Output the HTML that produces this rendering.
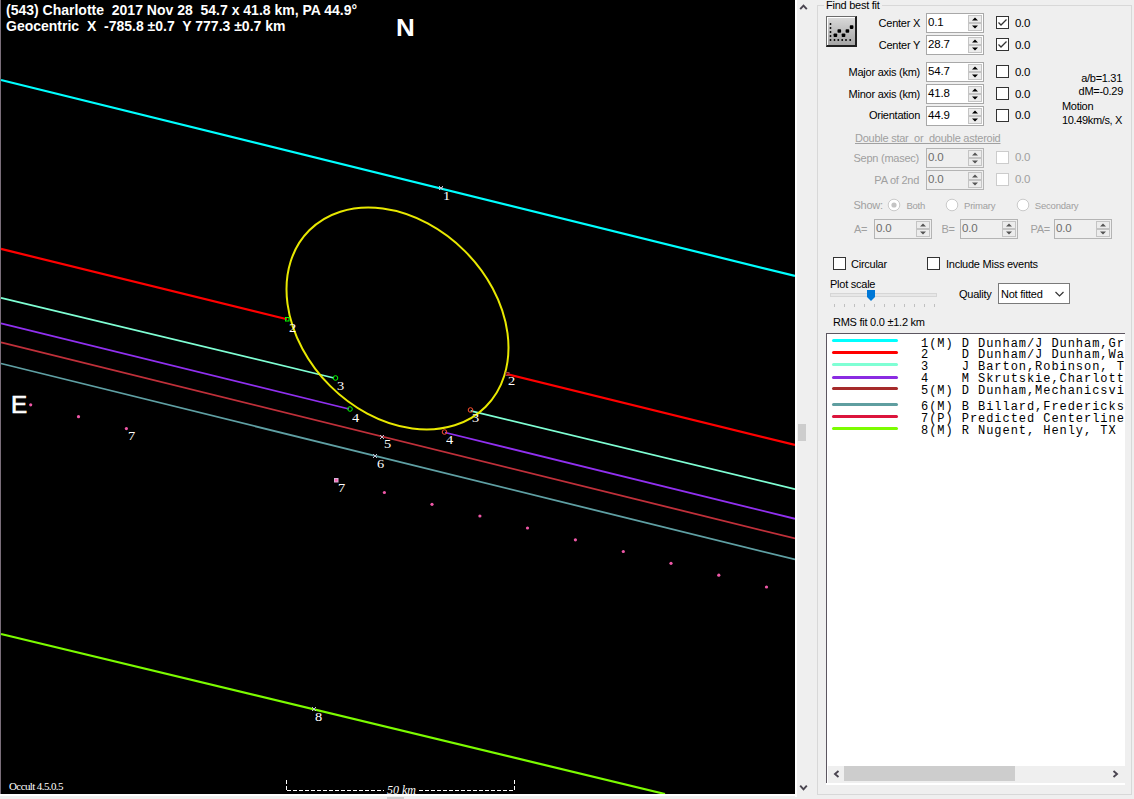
<!DOCTYPE html>
<html><head><meta charset="utf-8">
<style>
html,body{margin:0;padding:0}
body{width:1134px;height:799px;overflow:hidden;position:relative;background:#efefef;font-family:"Liberation Sans",sans-serif;font-size:11px;color:#000}
.a{position:absolute;white-space:pre}
#plot{position:absolute;left:0;top:0;width:795px;height:794px;background:#000;overflow:hidden}
.pt{position:absolute;white-space:pre;color:#fff}
.lbl{font-family:"Liberation Serif",serif;font-size:12px;color:#fff;position:absolute;line-height:11px;transform:scaleX(1.2);transform-origin:0 0}
.mono{font-family:"Liberation Mono",monospace}
</style></head><body>

<div class="a" style="left:795px;top:0;width:2px;height:797px;background:#fff"></div>
<div class="a" style="left:0;top:794px;width:797px;height:2.2px;background:#fff"></div>
<div class="a" style="left:387px;top:797px;width:17px;height:2px;background:#cdcdcd"></div>
<div id="plot">
<svg width="795" height="794" style="position:absolute;left:0;top:0">
<rect x="0" y="0" width="1" height="794" fill="#7a6e7a"/>
<g fill="none" stroke-linecap="butt">
<line x1="1" y1="80" x2="795" y2="276" stroke="#00ffff" stroke-width="2.2"/>
<line x1="1" y1="248.9" x2="287" y2="319.25" stroke="#ff0000" stroke-width="2.2"/>
<line x1="507" y1="374.2" x2="795" y2="445" stroke="#ff0000" stroke-width="2.2"/>
<line x1="1" y1="297.8" x2="334" y2="378" stroke="#7fffd4" stroke-width="1.7"/>
<line x1="470.6" y1="410.9" x2="795" y2="489.2" stroke="#7fffd4" stroke-width="1.7"/>
<line x1="1" y1="323.3" x2="349" y2="409" stroke="#9030f0" stroke-width="1.8"/>
<line x1="445" y1="432.5" x2="795" y2="518.8" stroke="#9030f0" stroke-width="1.8"/>
<line x1="1" y1="342.4" x2="795" y2="538.5" stroke="#c0303a" stroke-width="1.8"/>
<line x1="1" y1="363.5" x2="795" y2="559.5" stroke="#5fa0a4" stroke-width="1.8"/>
<line x1="1" y1="634" x2="665" y2="794" stroke="#7cfc00" stroke-width="2.2"/>
<ellipse cx="397.5" cy="318.5" rx="124.7" ry="95.3" transform="rotate(45 397.5 318.5)" stroke="#e8e800" stroke-width="2"/>
</g>
<!-- markers -->
<g fill="none">
<rect x="285.5" y="317.5" width="3.5" height="3.5" stroke="#00ff00" stroke-width="1"/>
<circle cx="335.5" cy="378" r="2.3" stroke="#00ff00" stroke-width="1"/>
<circle cx="350" cy="409" r="2.3" stroke="#00ff00" stroke-width="1"/>
<circle cx="470.5" cy="410" r="2.3" stroke="#ff5030" stroke-width="1"/>
<circle cx="444.5" cy="432" r="2.3" stroke="#ff5030" stroke-width="1"/>
<rect x="506" y="372.5" width="3" height="3" stroke="#a04040" stroke-width="1"/>
</g>
<g stroke="#c0c0d0" stroke-width="1" fill="none">
<path d="M439 186l4 4M443 186l-4 4M439 188h4"/>
<path d="M380 435l4 4M384 435l-4 4"/>
<path d="M373 454l4 4M377 454l-4 4"/>
<path d="M312 707l4 4M316 707l-4 4"/>
</g>
<rect x="334.5" y="478.5" width="3.5" height="3.5" fill="#ff60b0" stroke="#d8b0d8" stroke-width="1"/>
<g fill="#f058a8">
<circle cx="30.7" cy="404.8" r="1.6"/>
<circle cx="78.5" cy="416.7" r="1.6"/>
<circle cx="126.4" cy="428.6" r="1.6"/>
<circle cx="384.4" cy="492.5" r="1.6"/>
<circle cx="432" cy="504.3" r="1.6"/>
<circle cx="479.9" cy="516" r="1.6"/>
<circle cx="527.5" cy="528" r="1.6"/>
<circle cx="575.4" cy="539.8" r="1.6"/>
<circle cx="623.3" cy="551.5" r="1.6"/>
<circle cx="671" cy="563.3" r="1.6"/>
<circle cx="718.8" cy="575.2" r="1.6"/>
<circle cx="766.5" cy="587" r="1.6"/>
</g>
<!-- scale bar -->
<g stroke="#fff" stroke-width="1" fill="none">
<path d="M286.5 780v11M514.5 780v11" stroke-dasharray="4 2"/>
<path d="M287 790.5H384" stroke-dasharray="4 2"/>
<path d="M419 790.5H514" stroke-dasharray="4 2"/>
</g>
</svg>
<div class="pt" style="left:6px;top:2px;font-weight:bold;font-size:14px;line-height:16px">(543) Charlotte&nbsp; 2017 Nov 28&nbsp; 54.7 x 41.8 km, PA 44.9°</div>
<div class="pt" style="left:6px;top:18px;font-weight:bold;font-size:14px;line-height:16px">Geocentric&nbsp; X&nbsp; -785.8 ±0.7&nbsp; Y 777.3 ±0.7 km</div>
<div class="pt" style="left:396px;top:15.5px;font-weight:bold;font-size:23px;line-height:24px;transform:scaleX(1.13);transform-origin:0 0">N</div>
<div class="pt" style="left:11px;top:393px;font-size:23px;line-height:24px;transform:scaleX(1.05);transform-origin:0 0;-webkit-text-stroke:0.7px #fff">E</div>
<div class="lbl" style="left:443px;top:191px">1</div>
<div class="lbl" style="left:289px;top:322.5px">2</div>
<div class="lbl" style="left:508px;top:376px">2</div>
<div class="lbl" style="left:337px;top:381px">3</div>
<div class="lbl" style="left:472px;top:413px">3</div>
<div class="lbl" style="left:352px;top:412.5px">4</div>
<div class="lbl" style="left:446px;top:435px">4</div>
<div class="lbl" style="left:384px;top:439px">5</div>
<div class="lbl" style="left:377px;top:459px">6</div>
<div class="lbl" style="left:128px;top:431px">7</div>
<div class="lbl" style="left:338px;top:483px">7</div>
<div class="lbl" style="left:315px;top:712px">8</div>
<div class="pt" style="left:9px;top:780px;font-family:'Liberation Serif',serif;font-size:11px;line-height:12px;letter-spacing:-0.6px">Occult 4.5.0.5</div>
<div class="pt" style="left:387px;top:783.5px;font-family:'Liberation Serif',serif;font-style:italic;font-size:12px;line-height:12px">50 km</div>
</div>

<svg class="a" style="left:798px;top:0" width="12" height="799"><path d="M2.2 9.2L5.5 5.6L8.8 9.2" stroke="#4a4550" stroke-width="1.9" fill="none"/><path d="M2.2 785.6L5.5 789.4L8.8 785.6" stroke="#4a4550" stroke-width="1.9" fill="none"/><rect x="0" y="424" width="8" height="17" fill="#cdcdcd"/></svg>
<div class="a" style="left:817px;top:5px;width:315px;height:790px;box-sizing:border-box;border:1px solid #d8d8d8"></div>
<div class="a" style="left:824px;top:0px;width:58px;height:10px;background:#efefef"></div>
<div class="a" style="left:826px;top:-1.31px;font-size:11px;line-height:13px;color:#000;letter-spacing:-0.25px;">Find best fit</div>
<div class="a" style="left:826px;top:16px;width:31px;height:31px;box-sizing:border-box;border:1px solid #6a6a6a;border-right:2px solid #1e1e1e;border-bottom:2px solid #1e1e1e;background:linear-gradient(#dadada,#b9b9b9 60%,#a5a5a5)"></div>
<div class="a" style="left:827px;top:17px;width:28px;height:28px;box-sizing:border-box;border-top:1.5px solid #fff;border-left:1.5px solid #fff"></div>
<svg class="a" style="left:826px;top:16px" width="31" height="31">
<g fill="#000"><circle cx="4.5" cy="8" r="0.95"/><circle cx="4.5" cy="12" r="0.95"/><circle cx="4.5" cy="16" r="0.95"/><circle cx="4.5" cy="20" r="0.95"/><circle cx="4.5" cy="24" r="0.95"/>
<circle cx="8.5" cy="24" r="0.95"/><circle cx="12.3" cy="24" r="0.95"/><circle cx="16.2" cy="24" r="0.95"/><circle cx="20" cy="24" r="0.95"/><circle cx="24.2" cy="24" r="0.95"/>
<rect x="7.6" y="17.4" width="3.6" height="3.6" rx="0.8"/><rect x="11.5" y="13.2" width="3.6" height="3.6" rx="0.8"/><rect x="15.7" y="17.4" width="3.6" height="3.6" rx="0.8"/><rect x="19.6" y="13.2" width="3.6" height="3.6" rx="0.8"/><rect x="23.8" y="9.3" width="3.6" height="3.6" rx="0.8"/></g>
</svg>
<div class="a" style="right:214px;top:17.19px;font-size:11px;line-height:13px;color:#000;letter-spacing:-0.25px;">Center X</div>
<div class="a" style="left:926px;top:13px;width:58px;height:20px;box-sizing:border-box;border:1px solid #a8a8a8;background:#fff"></div>
<div class="a" style="left:928px;top:15.52px;font-size:11.5px;line-height:13px;color:#000;letter-spacing:-0.2px;">0.1</div>
<div class="a" style="left:968px;top:15px;width:14px;height:16px;box-sizing:border-box;border:1px solid #c4c4c4;background:#ececec"></div>
<div class="a" style="left:968px;top:22px;width:14px;height:1.5px;background:#c4c4c4"></div>
<svg class="a" style="left:968px;top:15px" width="14" height="16"><path d="M4 5.5L7 2.5L10 5.5Z M4 10.5L7 13.5L10 10.5Z" fill="#000"/></svg>
<div class="a" style="left:996px;top:16px;width:13px;height:13px;box-sizing:border-box;border:1px solid #333;background:#fff"></div>
<svg class="a" style="left:996px;top:16px" width="13" height="13"><path d="M2.5 6.5L5 9L10.5 3.5" stroke="#333" stroke-width="1.3" fill="none"/></svg>
<div class="a" style="left:1015px;top:17.02px;font-size:11.5px;line-height:13px;color:#000;letter-spacing:-0.3px;">0.0</div>
<div class="a" style="right:214px;top:39.39px;font-size:11px;line-height:13px;color:#000;letter-spacing:-0.25px;">Center Y</div>
<div class="a" style="left:926px;top:35px;width:58px;height:20px;box-sizing:border-box;border:1px solid #a8a8a8;background:#fff"></div>
<div class="a" style="left:928px;top:37.52px;font-size:11.5px;line-height:13px;color:#000;letter-spacing:-0.2px;">28.7</div>
<div class="a" style="left:968px;top:37px;width:14px;height:16px;box-sizing:border-box;border:1px solid #c4c4c4;background:#ececec"></div>
<div class="a" style="left:968px;top:44px;width:14px;height:1.5px;background:#c4c4c4"></div>
<svg class="a" style="left:968px;top:37px" width="14" height="16"><path d="M4 5.5L7 2.5L10 5.5Z M4 10.5L7 13.5L10 10.5Z" fill="#000"/></svg>
<div class="a" style="left:996px;top:38px;width:13px;height:13px;box-sizing:border-box;border:1px solid #333;background:#fff"></div>
<svg class="a" style="left:996px;top:38px" width="13" height="13"><path d="M2.5 6.5L5 9L10.5 3.5" stroke="#333" stroke-width="1.3" fill="none"/></svg>
<div class="a" style="left:1015px;top:39.22px;font-size:11.5px;line-height:13px;color:#000;letter-spacing:-0.3px;">0.0</div>
<div class="a" style="right:214px;top:66.39px;font-size:11px;line-height:13px;color:#000;letter-spacing:-0.25px;">Major axis (km)</div>
<div class="a" style="left:926px;top:62px;width:58px;height:20px;box-sizing:border-box;border:1px solid #a8a8a8;background:#fff"></div>
<div class="a" style="left:928px;top:64.52px;font-size:11.5px;line-height:13px;color:#000;letter-spacing:-0.2px;">54.7</div>
<div class="a" style="left:968px;top:64px;width:14px;height:16px;box-sizing:border-box;border:1px solid #c4c4c4;background:#ececec"></div>
<div class="a" style="left:968px;top:71px;width:14px;height:1.5px;background:#c4c4c4"></div>
<svg class="a" style="left:968px;top:64px" width="14" height="16"><path d="M4 5.5L7 2.5L10 5.5Z M4 10.5L7 13.5L10 10.5Z" fill="#000"/></svg>
<div class="a" style="left:996px;top:65px;width:13px;height:13px;box-sizing:border-box;border:1px solid #333;background:#fff"></div>
<div class="a" style="left:1015px;top:66.22px;font-size:11.5px;line-height:13px;color:#000;letter-spacing:-0.3px;">0.0</div>
<div class="a" style="right:214px;top:88.29px;font-size:11px;line-height:13px;color:#000;letter-spacing:-0.25px;">Minor axis (km)</div>
<div class="a" style="left:926px;top:84px;width:58px;height:20px;box-sizing:border-box;border:1px solid #a8a8a8;background:#fff"></div>
<div class="a" style="left:928px;top:86.52px;font-size:11.5px;line-height:13px;color:#000;letter-spacing:-0.2px;">41.8</div>
<div class="a" style="left:968px;top:86px;width:14px;height:16px;box-sizing:border-box;border:1px solid #c4c4c4;background:#ececec"></div>
<div class="a" style="left:968px;top:93px;width:14px;height:1.5px;background:#c4c4c4"></div>
<svg class="a" style="left:968px;top:86px" width="14" height="16"><path d="M4 5.5L7 2.5L10 5.5Z M4 10.5L7 13.5L10 10.5Z" fill="#000"/></svg>
<div class="a" style="left:996px;top:87px;width:13px;height:13px;box-sizing:border-box;border:1px solid #333;background:#fff"></div>
<div class="a" style="left:1015px;top:88.12px;font-size:11.5px;line-height:13px;color:#000;letter-spacing:-0.3px;">0.0</div>
<div class="a" style="right:214px;top:109.29px;font-size:11px;line-height:13px;color:#000;letter-spacing:-0.25px;">Orientation</div>
<div class="a" style="left:926px;top:106px;width:58px;height:20px;box-sizing:border-box;border:1px solid #a8a8a8;background:#fff"></div>
<div class="a" style="left:928px;top:108.52px;font-size:11.5px;line-height:13px;color:#000;letter-spacing:-0.2px;">44.9</div>
<div class="a" style="left:968px;top:108px;width:14px;height:16px;box-sizing:border-box;border:1px solid #c4c4c4;background:#ececec"></div>
<div class="a" style="left:968px;top:115px;width:14px;height:1.5px;background:#c4c4c4"></div>
<svg class="a" style="left:968px;top:108px" width="14" height="16"><path d="M4 5.5L7 2.5L10 5.5Z M4 10.5L7 13.5L10 10.5Z" fill="#000"/></svg>
<div class="a" style="left:996px;top:109px;width:13px;height:13px;box-sizing:border-box;border:1px solid #333;background:#fff"></div>
<div class="a" style="left:1015px;top:109.12px;font-size:11.5px;line-height:13px;color:#000;letter-spacing:-0.3px;">0.0</div>
<div class="a" style="right:12px;top:72.09px;font-size:11px;line-height:13px;color:#000;letter-spacing:-0.3px;">a/b=1.31</div>
<div class="a" style="right:11px;top:85.09px;font-size:11px;line-height:13px;color:#000;letter-spacing:-0.3px;">dM=-0.29</div>
<div class="a" style="left:1062px;top:100.29px;font-size:11px;line-height:13px;color:#000;letter-spacing:-0.3px;">Motion</div>
<div class="a" style="left:1062px;top:113.89px;font-size:11px;line-height:13px;color:#000;letter-spacing:-0.35px;">10.49km/s, X</div>
<div class="a" style="left:855px;top:132.49px;font-size:11px;line-height:13px;color:#a0a0a0;letter-spacing:-0.25px;text-decoration:underline;">Double star  or  double asteroid</div>
<div class="a" style="right:215px;top:152.19px;font-size:11px;line-height:13px;color:#a0a0a0;letter-spacing:-0.25px;">Sepn (masec)</div>
<div class="a" style="left:926px;top:148px;width:58px;height:20px;box-sizing:border-box;border:1px solid #b4b4b4;background:#efefef"></div>
<div class="a" style="left:928px;top:150.52px;font-size:11.5px;line-height:13px;color:#6d6d6d;letter-spacing:-0.2px;">0.0</div>
<div class="a" style="left:968px;top:150px;width:14px;height:16px;box-sizing:border-box;border:1px solid #c4c4c4;background:#ececec"></div>
<div class="a" style="left:968px;top:157px;width:14px;height:1.5px;background:#c4c4c4"></div>
<svg class="a" style="left:968px;top:150px" width="14" height="16"><path d="M4 5.5L7 2.5L10 5.5Z M4 10.5L7 13.5L10 10.5Z" fill="#555"/></svg>
<div class="a" style="left:996px;top:151px;width:13px;height:13px;box-sizing:border-box;border:1px solid #cccccc;background:#fff"></div>
<div class="a" style="left:1015px;top:151.02px;font-size:11.5px;line-height:13px;color:#a0a0a0;letter-spacing:-0.3px;">0.0</div>
<div class="a" style="right:215px;top:174.19px;font-size:11px;line-height:13px;color:#a0a0a0;letter-spacing:-0.25px;">PA of 2nd</div>
<div class="a" style="left:926px;top:170px;width:58px;height:20px;box-sizing:border-box;border:1px solid #b4b4b4;background:#efefef"></div>
<div class="a" style="left:928px;top:172.52px;font-size:11.5px;line-height:13px;color:#6d6d6d;letter-spacing:-0.2px;">0.0</div>
<div class="a" style="left:968px;top:172px;width:14px;height:16px;box-sizing:border-box;border:1px solid #c4c4c4;background:#ececec"></div>
<div class="a" style="left:968px;top:179px;width:14px;height:1.5px;background:#c4c4c4"></div>
<svg class="a" style="left:968px;top:172px" width="14" height="16"><path d="M4 5.5L7 2.5L10 5.5Z M4 10.5L7 13.5L10 10.5Z" fill="#555"/></svg>
<div class="a" style="left:996px;top:173px;width:13px;height:13px;box-sizing:border-box;border:1px solid #cccccc;background:#fff"></div>
<div class="a" style="left:1015px;top:173.02px;font-size:11.5px;line-height:13px;color:#a0a0a0;letter-spacing:-0.3px;">0.0</div>
<div class="a" style="left:853.5px;top:199.49px;font-size:11px;line-height:13px;color:#a0a0a0;letter-spacing:-0.25px;">Show:</div>
<svg class="a" style="left:887.4px;top:197.5px" width="14" height="14"><circle cx="7" cy="7" r="5.8" fill="#fff" stroke="#cacaca" stroke-width="1"/><circle cx="7" cy="7" r="2.6" fill="#c4c4c4"/></svg>
<div class="a" style="left:906.4px;top:199.01px;font-size:9.5px;line-height:13px;color:#a0a0a0;letter-spacing:-0.2px;">Both</div>
<svg class="a" style="left:945px;top:197.5px" width="14" height="14"><circle cx="7" cy="7" r="5.8" fill="#fff" stroke="#cacaca" stroke-width="1"/></svg>
<div class="a" style="left:964px;top:199.01px;font-size:9.5px;line-height:13px;color:#a0a0a0;letter-spacing:-0.2px;">Primary</div>
<svg class="a" style="left:1015.8px;top:197.5px" width="14" height="14"><circle cx="7" cy="7" r="5.8" fill="#fff" stroke="#cacaca" stroke-width="1"/></svg>
<div class="a" style="left:1034.8px;top:199.01px;font-size:9.5px;line-height:13px;color:#a0a0a0;letter-spacing:-0.2px;">Secondary</div>
<div class="a" style="left:854px;top:223.09px;font-size:11px;line-height:13px;color:#a0a0a0;letter-spacing:-0.25px;">A=</div>
<div class="a" style="left:874px;top:219px;width:58px;height:20px;box-sizing:border-box;border:1px solid #b4b4b4;background:#efefef"></div>
<div class="a" style="left:876px;top:221.52px;font-size:11.5px;line-height:13px;color:#6d6d6d;letter-spacing:-0.2px;">0.0</div>
<div class="a" style="left:916px;top:221px;width:14px;height:16px;box-sizing:border-box;border:1px solid #c4c4c4;background:#ececec"></div>
<div class="a" style="left:916px;top:228px;width:14px;height:1.5px;background:#c4c4c4"></div>
<svg class="a" style="left:916px;top:221px" width="14" height="16"><path d="M4 5.5L7 2.5L10 5.5Z M4 10.5L7 13.5L10 10.5Z" fill="#555"/></svg>
<div class="a" style="left:941.5px;top:223.09px;font-size:11px;line-height:13px;color:#a0a0a0;letter-spacing:-0.25px;">B=</div>
<div class="a" style="left:960px;top:219px;width:58px;height:20px;box-sizing:border-box;border:1px solid #b4b4b4;background:#efefef"></div>
<div class="a" style="left:962px;top:221.52px;font-size:11.5px;line-height:13px;color:#6d6d6d;letter-spacing:-0.2px;">0.0</div>
<div class="a" style="left:1002px;top:221px;width:14px;height:16px;box-sizing:border-box;border:1px solid #c4c4c4;background:#ececec"></div>
<div class="a" style="left:1002px;top:228px;width:14px;height:1.5px;background:#c4c4c4"></div>
<svg class="a" style="left:1002px;top:221px" width="14" height="16"><path d="M4 5.5L7 2.5L10 5.5Z M4 10.5L7 13.5L10 10.5Z" fill="#555"/></svg>
<div class="a" style="left:1030.5px;top:223.09px;font-size:11px;line-height:13px;color:#a0a0a0;letter-spacing:-0.25px;">PA=</div>
<div class="a" style="left:1054px;top:219px;width:58px;height:20px;box-sizing:border-box;border:1px solid #b4b4b4;background:#efefef"></div>
<div class="a" style="left:1056px;top:221.52px;font-size:11.5px;line-height:13px;color:#6d6d6d;letter-spacing:-0.2px;">0.0</div>
<div class="a" style="left:1096px;top:221px;width:14px;height:16px;box-sizing:border-box;border:1px solid #c4c4c4;background:#ececec"></div>
<div class="a" style="left:1096px;top:228px;width:14px;height:1.5px;background:#c4c4c4"></div>
<svg class="a" style="left:1096px;top:221px" width="14" height="16"><path d="M4 5.5L7 2.5L10 5.5Z M4 10.5L7 13.5L10 10.5Z" fill="#555"/></svg>
<div class="a" style="left:833px;top:257px;width:13px;height:13px;box-sizing:border-box;border:1px solid #333;background:#fff"></div>
<div class="a" style="left:851px;top:257.69px;font-size:11px;line-height:13px;color:#000;letter-spacing:-0.25px;">Circular</div>
<div class="a" style="left:927px;top:257px;width:13px;height:13px;box-sizing:border-box;border:1px solid #333;background:#fff"></div>
<div class="a" style="left:946px;top:257.69px;font-size:11px;line-height:13px;color:#000;letter-spacing:-0.25px;">Include Miss events</div>
<div class="a" style="left:830px;top:277.69px;font-size:11px;line-height:13px;color:#000;letter-spacing:-0.25px;">Plot scale</div>
<div class="a" style="left:830px;top:293px;width:107px;height:4px;box-sizing:border-box;border:1px solid #d6d6d6;background:#e7e7e7"></div>
<svg class="a" style="left:830px;top:304px" width="110" height="4"><rect x="4" y="0" width="1" height="3" fill="#c0c0c0"/><rect x="14" y="0" width="1" height="3" fill="#c0c0c0"/><rect x="24" y="0" width="1" height="3" fill="#c0c0c0"/><rect x="34" y="0" width="1" height="3" fill="#c0c0c0"/><rect x="44" y="0" width="1" height="3" fill="#c0c0c0"/><rect x="54" y="0" width="1" height="3" fill="#c0c0c0"/><rect x="64" y="0" width="1" height="3" fill="#c0c0c0"/><rect x="74" y="0" width="1" height="3" fill="#c0c0c0"/><rect x="84" y="0" width="1" height="3" fill="#c0c0c0"/><rect x="94" y="0" width="1" height="3" fill="#c0c0c0"/><rect x="104" y="0" width="1" height="3" fill="#c0c0c0"/></svg>
<svg class="a" style="left:866px;top:289px" width="10" height="13"><path d="M1 1H9V8L5 12L1 8Z" fill="#0078d7"/></svg>
<div class="a" style="left:959px;top:288.19px;font-size:11px;line-height:13px;color:#000;letter-spacing:-0.25px;">Quality</div>
<div class="a" style="left:998px;top:283px;width:72px;height:21px;box-sizing:border-box;border:1px solid #7a7a7a;background:#fff"></div>
<div class="a" style="left:1001px;top:287.69px;font-size:11px;line-height:13px;color:#000;letter-spacing:-0.25px;">Not fitted</div>
<svg class="a" style="left:1054px;top:290px" width="12" height="8"><path d="M1.5 2L5.5 6L9.5 2" stroke="#333" stroke-width="1.2" fill="none"/></svg>
<div class="a" style="left:833px;top:315.69px;font-size:11px;line-height:13px;color:#000;letter-spacing:-0.25px;">RMS fit 0.0 ±1.2 km</div>
<div class="a" style="left:826px;top:333px;width:299px;height:450px;box-sizing:border-box;border-left:1.6px solid #5c5660;border-top:1.6px solid #5c5660;background:#fff"></div>
<div class="a" style="left:1125px;top:333px;width:6px;height:451px;background:#efefef"></div>
<div class="a" style="left:826px;top:783px;width:299px;height:1.5px;background:#fff"></div>
<div class="a" style="left:828px;top:766px;width:297px;height:17px;background:#efefef"></div>
<div class="a" style="left:844px;top:766px;width:171px;height:14.5px;background:#cdcdcd"></div>
<svg class="a" style="left:828px;top:766px" width="297" height="17"><path d="M10.5 5L7 8L10.5 11" stroke="#4a4550" stroke-width="1.9" fill="none"/><path d="M285.5 5L289 8L285.5 11" stroke="#4a4550" stroke-width="1.9" fill="none"/></svg>
<div class="a" style="left:832px;top:339.4px;width:66px;height:3px;border-radius:1.5px;background:#00ffff"></div>
<div class="a" style="left:832px;top:351.3px;width:66px;height:3px;border-radius:1.5px;background:#ff0000"></div>
<div class="a" style="left:832px;top:363.1px;width:66px;height:3px;border-radius:1.5px;background:#7fffd4"></div>
<div class="a" style="left:832px;top:375.6px;width:66px;height:3px;border-radius:1.5px;background:#8a2be2"></div>
<div class="a" style="left:832px;top:387.2px;width:66px;height:3px;border-radius:1.5px;background:#a52a2a"></div>
<div class="a" style="left:832px;top:403.2px;width:66px;height:3px;border-radius:1.5px;background:#5f9ea0"></div>
<div class="a" style="left:832px;top:415.3px;width:66px;height:3px;border-radius:1.5px;background:#dc143c"></div>
<div class="a" style="left:832px;top:427.3px;width:66px;height:3px;border-radius:1.5px;background:#7cfc00"></div>
<div class="a" style="left:828px;top:335px;width:297px;height:431px;overflow:hidden">
<div class="a mono" style="left:93px;top:2.5000000000000115px;font-size:12px;letter-spacing:0.95px;line-height:13px;color:#000">1(M) D Dunham/J Dunham,Gr</div>
<div class="a mono" style="left:93px;top:14.099999999999977px;font-size:12px;letter-spacing:0.95px;line-height:13px;color:#000">2    D Dunham/J Dunham,Wa</div>
<div class="a mono" style="left:93px;top:26.099999999999977px;font-size:12px;letter-spacing:0.95px;line-height:13px;color:#000">3    J Barton,Robinson, T</div>
<div class="a mono" style="left:93px;top:38.09999999999998px;font-size:12px;letter-spacing:0.95px;line-height:13px;color:#000">4    M Skrutskie,Charlott</div>
<div class="a mono" style="left:93px;top:50.2px;font-size:12px;letter-spacing:0.95px;line-height:13px;color:#000">5(M) D Dunham,Mechanicsvi</div>
<div class="a mono" style="left:93px;top:66.2px;font-size:12px;letter-spacing:0.95px;line-height:13px;color:#000">6(M) B Billard,Fredericks</div>
<div class="a mono" style="left:93px;top:78.2px;font-size:12px;letter-spacing:0.95px;line-height:13px;color:#000">7(P) Predicted Centerline</div>
<div class="a mono" style="left:93px;top:90.2px;font-size:12px;letter-spacing:0.95px;line-height:13px;color:#000">8(M) R Nugent, Henly, TX</div>
</div>
</body></html>
